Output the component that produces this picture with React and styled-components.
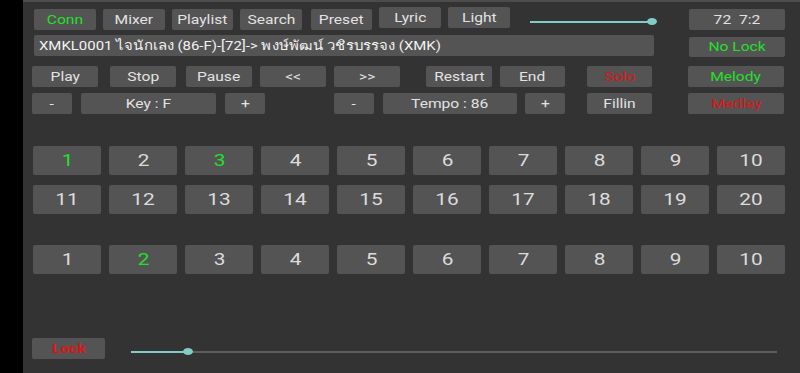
import React from 'react'
import styled, { createGlobalStyle } from 'styled-components'

const GlobalStyle = createGlobalStyle`
  html, body {
    margin: 0;
    padding: 0;
    background: #000;
  }
  body {
    font-family: Roboto, "Noto Sans", "DejaVu Sans", sans-serif;
  }
`

const GREEN = '#22e02a'
const RED = '#dc1616'
const TEAL = '#7fcdc5'

const topButtons = [
  { label: 'Conn', w: 62, ml: 11, color: GREEN },
  { label: 'Mixer', w: 62, ml: 7 },
  { label: 'Playlist', w: 61, ml: 7 },
  { label: 'Search', w: 62, ml: 7 },
  { label: 'Preset', w: 61, ml: 9 },
  { label: 'Lyric', w: 62, ml: 7, up: true },
  { label: 'Light', w: 62, ml: 7, up: true }
]

const transportButtons = [
  { label: 'Play', w: 66, ml: 9 },
  { label: 'Stop', w: 66, ml: 12 },
  { label: 'Pause', w: 66, ml: 10 },
  { label: '<<', w: 66, ml: 8 },
  { label: '>>', w: 66, ml: 8 },
  { label: 'Restart', w: 66, ml: 26 },
  { label: 'End', w: 65, ml: 8 },
  { label: 'Solo', w: 65, ml: 22, color: RED },
  { label: 'Melody', w: 96, ml: 36, color: GREEN }
]

const tuneButtons = [
  { label: '-', w: 40, ml: 9 },
  { label: 'Key : F', w: 135, ml: 9 },
  { label: '+', w: 40, ml: 9 },
  { label: '-', w: 40, ml: 69 },
  { label: 'Tempo : 86', w: 134, ml: 9 },
  { label: '+', w: 40, ml: 8 },
  { label: 'Fillin', w: 65, ml: 22 },
  { label: 'Medley', w: 96, ml: 36, color: RED }
]

const tracks = Array.from({ length: 20 }, (_, i) => i + 1)
const activeTracks = [1, 3]
const parts = Array.from({ length: 10 }, (_, i) => i + 1)
const activeParts = [2]

function Slider ({ width, value, ml, mt = 0 }) {
  const pos = Math.round(width * value)
  return (
    <SliderWrap $w={width} $ml={ml} $mt={mt}>
      <Track>
        <Fill style={{ width: pos }} />
        <Rest />
      </Track>
      <Thumb style={{ left: pos - 5 }} />
    </SliderWrap>
  )
}

function App () {
  return (
    <Screen>
      <GlobalStyle />
      <SideBar />
      <Panel>
        <Row $h={21} $mt={7}>
          {topButtons.map((b) => (
            <Btn key={b.label} $w={b.w} $ml={b.ml} $color={b.color} $up={b.up}>
              <Label>{b.label}</Label>
            </Btn>
          ))}
          <Slider width={122} value={1} ml={20} mt={2} />
          <Btn $w={96} $ml={37}>
            <Label>{'72  7:2'}</Label>
          </Btn>
        </Row>

        <Row $h={21} $mt={5}>
          <Title>
            <TitleText>XMKL0001 ไจนักเลง (86-F)-[72]-&gt; พงษ์พัฒน์ วชิรบรรจง (XMK)</TitleText>
          </Title>
          <Btn $w={96} $ml={35} $color={GREEN} $down>
            <Label>No Lock</Label>
          </Btn>
        </Row>

        <Row $h={21} $mt={10}>
          {transportButtons.map((b) => (
            <Btn key={b.label} $w={b.w} $ml={b.ml} $color={b.color}>
              <Label>{b.label}</Label>
            </Btn>
          ))}
        </Row>

        <Row $h={20} $mt={6}>
          {tuneButtons.map((b, i) => (
            <Btn key={i} $w={b.w} $ml={b.ml} $color={b.color}>
              <Label>{b.label}</Label>
            </Btn>
          ))}
        </Row>

        <PadGrid $mt={33}>
          {tracks.map((n) => (
            <Pad key={n} $color={activeTracks.includes(n) ? GREEN : undefined}>
              <PadLabel>{n}</PadLabel>
            </Pad>
          ))}
        </PadGrid>

        <PadGrid $mt={31}>
          {parts.map((n) => (
            <Pad key={n} $color={activeParts.includes(n) ? GREEN : undefined}>
              <PadLabel>{n}</PadLabel>
            </Pad>
          ))}
        </PadGrid>

        <Row $h={21} $mt={64}>
          <Btn $w={73} $ml={9} $color={RED}>
            <Label $bold>Lock</Label>
          </Btn>
          <Slider width={646} value={57 / 646} ml={26} mt={3} />
        </Row>
      </Panel>
    </Screen>
  )
}

const Screen = styled.div`
  display: flex;
  width: 800px;
  height: 373px;
  overflow: hidden;
  background: #000;
`

const SideBar = styled.div`
  width: 23px;
  flex: none;
  background: #000;
`

const Panel = styled.div`
  flex: 1;
  display: flex;
  flex-direction: column;
  background: #333333;
  border-top: 2px solid #4c4c4c;
`

const Row = styled.div`
  display: flex;
  align-items: flex-start;
  height: ${(p) => p.$h}px;
  margin-top: ${(p) => p.$mt}px;
  flex: none;
`

const Btn = styled.div`
  box-sizing: border-box;
  flex: none;
  display: flex;
  align-items: center;
  justify-content: center;
  width: ${(p) => p.$w}px;
  height: ${(p) => (p.$down ? 20 : 21)}px;
  margin-left: ${(p) => p.$ml}px;
  margin-top: ${(p) => (p.$up ? -2 : p.$down ? 2 : 0)}px;
  background: #545454;
  border-radius: 2px;
  color: ${(p) => p.$color || '#e2e2e2'};
  font-size: 12px;
  white-space: pre;
`

const Label = styled.span`
  display: inline-block;
  transform: scaleX(1.3);
  font-weight: ${(p) => (p.$bold ? 700 : 400)};
  line-height: 1;
`

const Title = styled.div`
  box-sizing: border-box;
  flex: none;
  display: flex;
  align-items: center;
  width: 620px;
  height: 21px;
  margin-left: 11px;
  padding-left: 5px;
  background: #545454;
  border-radius: 2px;
  color: #f2f2f2;
  font-size: 13px;
  white-space: nowrap;
  overflow: hidden;
`

const TitleText = styled.span`
  display: inline-block;
  transform: scaleX(1.15);
  transform-origin: left center;
  line-height: 1;
`

const PadGrid = styled.div`
  display: grid;
  grid-template-columns: repeat(10, 68px);
  grid-auto-rows: 29px;
  column-gap: 8px;
  row-gap: 10px;
  margin-top: ${(p) => p.$mt}px;
  padding-left: 10px;
  flex: none;
`

const Pad = styled.div`
  display: flex;
  align-items: center;
  justify-content: center;
  background: #545454;
  border-radius: 2px;
  color: ${(p) => p.$color || '#dcdcdc'};
  font-size: 16px;
`

const PadLabel = styled.span`
  display: inline-block;
  transform: scaleX(1.3);
  line-height: 1;
`

const SliderWrap = styled.div`
  position: relative;
  flex: none;
  width: ${(p) => p.$w}px;
  height: 21px;
  margin-left: ${(p) => p.$ml}px;
  margin-top: ${(p) => p.$mt}px;
  display: flex;
  align-items: center;
`

const Track = styled.div`
  display: flex;
  width: 100%;
  height: 2px;
`

const Fill = styled.div`
  height: 2px;
  background: ${TEAL};
  flex: none;
`

const Rest = styled.div`
  flex: 1;
  height: 2px;
  background: #5e5e5e;
`

const Thumb = styled.div`
  position: absolute;
  top: 50%;
  width: 10px;
  height: 7px;
  margin-top: -3.5px;
  border-radius: 50%;
  background: ${TEAL};
`

export default App
